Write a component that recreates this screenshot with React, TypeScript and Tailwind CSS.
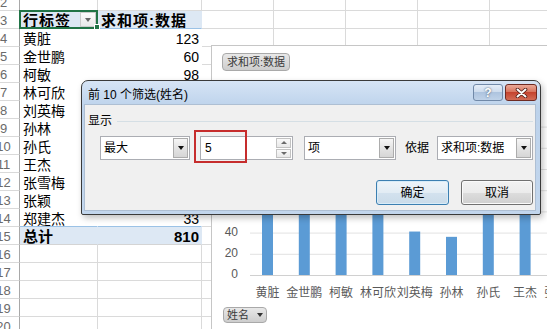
import React from "react";

const names = ["黄脏", "金世鹏", "柯敏", "林可欣", "刘英梅", "孙林", "孙氏", "王杰", "张雪梅", "张颖", "郑建杰"];
const values = [123, 60, 98, 92, 41, 36, 87, 95, 80, 65, 33];

function DownTri() {
  return <span className="block w-0 h-0 border-l-[3.5px] border-r-[3.5px] border-t-[4px] border-l-transparent border-r-transparent border-t-[#111]" />;
}

function Combo({ w, text }: { w: string; text: string }) {
  return (
    <div className={`${w} h-[24px] shrink-0 border border-[#abadb3] bg-white flex`}>
      <div className="flex-1 flex items-center pl-[3px] text-[12px] leading-none text-black whitespace-nowrap">{text}</div>
      <div className="w-[15px] my-[1px] mr-[1px] border border-[#acacac] bg-[linear-gradient(180deg,#f6f6f6_0%,#e4e4e4_50%,#d6d6d6_100%)] flex items-center justify-center">
        <DownTri />
      </div>
    </div>
  );
}

function Row({ r }: { r: number }) {
  const isHeader = r === 3;
  const isData = r >= 4 && r <= 14;
  const isTotal = r === 15;
  const idx = r - 4;

  let aCls = "w-[78px] shrink-0 border-r border-b border-[#dadada]";
  let bCls = "w-[104px] shrink-0 border-r border-b border-[#dadada]";
  if (isHeader) {
    aCls = "relative w-[78px] shrink-0 border-r border-b border-r-transparent border-b-[#9bc2e6] bg-[#dde8f4] flex items-center";
    bCls = "w-[104px] shrink-0 border-r border-b border-r-transparent border-b-[#9bc2e6] bg-[#dde8f4] flex items-center";
  } else if (isData) {
    aCls =
      r === 14
        ? "w-[78px] shrink-0 border-r border-b border-r-transparent border-b-[#9bc2e6] flex items-center pt-[2px] pl-[3px]"
        : "w-[78px] shrink-0 border-r border-b border-transparent flex items-center pt-[2px] pl-[3px]";
    bCls =
      r === 14
        ? "w-[104px] shrink-0 border-r border-b border-r-transparent border-b-[#9bc2e6] flex items-center justify-end pt-[2px] pr-[2px]"
        : "w-[104px] shrink-0 border-r border-b border-transparent flex items-center justify-end pt-[2px] pr-[2px]";
  } else if (isTotal) {
    aCls = "w-[78px] shrink-0 border-r border-b border-r-transparent border-b-[#d4d4d4] bg-[#dde8f4] flex items-center pt-[1px] pl-[3px]";
    bCls = "w-[104px] shrink-0 border-r border-b border-r-transparent border-b-[#d4d4d4] bg-[#dde8f4] flex items-center justify-end pt-[1px] pr-[2px]";
  }

  return (
    <div className="flex h-[18px] shrink-0">
      <div className="w-[32px] shrink-0 border-r border-b border-r-[#a8a8a8] border-b-[#d9d9d9] flex items-center justify-center text-[13px] leading-none text-[#6a6a6a] pt-[1px]">
        {r}
      </div>
      <div className={aCls}>
        {isHeader && (
          <>
            <span className="pl-[3px] pt-[1px] text-[15px] font-bold tracking-[1px] leading-none text-black">行标签</span>
            <div className="ml-auto mr-[1px] w-[16px] h-[15px] border border-[#cbcbcb] bg-[linear-gradient(180deg,#fbfbfb_0%,#e9e9e9_100%)] flex items-center justify-center">
              <span className="block w-0 h-0 border-l-[3.5px] border-r-[3.5px] border-t-[4px] border-l-transparent border-r-transparent border-t-[#666]" />
            </div>
            <div className="absolute -left-[1px] -top-[1px] w-[79px] h-[19px] border-2 border-[#217346] pointer-events-none" />
            <div className="absolute left-[74px] top-[13px] w-[6px] h-[6px] bg-[#217346] border border-white" />
          </>
        )}
        {isData && <span className="text-[14px] leading-none text-black">{names[idx]}</span>}
        {isTotal && <span className="text-[15px] font-bold leading-none text-black">总计</span>}
      </div>
      <div className={bCls}>
        {isHeader && <span className="pl-[3px] pt-[1px] text-[15px] font-bold tracking-[1px] leading-none text-black whitespace-nowrap">求和项:数据</span>}
        {isData && <span className="text-[14px] leading-none text-black">{values[idx]}</span>}
        {isTotal && <span className="text-[15px] font-bold leading-none text-black">810</span>}
      </div>
      <div className="w-[72px] shrink-0 border-r border-b border-[#dadada]" />
      <div className="w-[72px] shrink-0 border-r border-b border-[#dadada]" />
      <div className="w-[72px] shrink-0 border-r border-b border-[#dadada]" />
      <div className="w-[72px] shrink-0 border-r border-b border-[#dadada]" />
      <div className="w-[72px] shrink-0 border-r border-b border-[#dadada]" />
    </div>
  );
}

function Chart() {
  const scale = 1.06;
  const base = 204;
  const grid = [20, 40, 60, 80, 100, 120, 140];
  const axis = [0, 20, 40, 60, 80, 100, 120, 140];
  return (
    <div className="absolute left-[211px] top-[45px] w-[345px] h-[290px] bg-white border-l border-t border-[#c6c6c6] flex flex-col">
      <div className="ml-[10px] mt-[7px] self-start h-[18px] px-[4px] rounded-[4px] border border-[#a9a9a9] bg-[linear-gradient(180deg,#e8e8e8_0%,#cdcdcd_100%)] flex items-center text-[11px] leading-none text-[#3a3a3a] whitespace-nowrap">
        求和项:数据
      </div>
      <svg width="335" height="236" className="block shrink-0">
        {grid.map((v) => (
          <line key={v} x1={38} x2={335} y1={base - v * scale + 0.5} y2={base - v * scale + 0.5} stroke="#e2e2e2" strokeWidth={1} />
        ))}
        <line x1={38} x2={335} y1={base + 0.5} y2={base + 0.5} stroke="#d0d0d0" strokeWidth={1} />
        {values.map((v, i) => (
          <rect key={i} x={50 + 36.8 * i} y={base - v * scale} width={11} height={v * scale} fill="#5b9bd5" />
        ))}
        {axis.map((v) => (
          <text
            key={v}
            x={26}
            y={base - v * scale - 1}
            textAnchor="end"
            dominantBaseline="central"
            fontSize={12}
            fill="#595959"
            fontFamily="'Liberation Sans', sans-serif"
          >
            {v}
          </text>
        ))}
        {names.map((n, i) => (
          <text
            key={n}
            x={55.5 + 36.8 * i}
            y={220.5}
            textAnchor="middle"
            dominantBaseline="central"
            fontSize={12}
            fill="#595959"
            fontFamily="'Noto Sans CJK SC', sans-serif"
          >
            {n}
          </text>
        ))}
      </svg>
      <div className="ml-[11px] self-start h-[16px] w-[44px] rounded-[4px] border border-[#a9a9a9] bg-[linear-gradient(180deg,#e8e8e8_0%,#cdcdcd_100%)] flex items-center pl-[3px] gap-[8px] text-[11px] leading-none text-[#3a3a3a]">
        <span>姓名</span>
        <span className="block w-0 h-0 border-l-[3px] border-r-[3px] border-t-[4px] border-l-transparent border-r-transparent border-t-[#333]" />
      </div>
    </div>
  );
}

function Dialog() {
  return (
    <div className="absolute left-[81px] top-[80px] w-[460px] h-[135px] rounded-t-[7px] rounded-b-[2px] border border-[#3a3a3a] bg-[linear-gradient(180deg,#d6e4f5_0%,#bcd2eb_20%,#c2d6ed_100%)] flex flex-col shadow-[2px_3px_6px_rgba(0,0,0,0.25)]">
      <div className="h-[23px] shrink-0 flex items-start justify-between">
        <div className="pl-[6px] pt-[7px] text-[12px] leading-[14px] text-black whitespace-nowrap">前 10 个筛选(姓名)</div>
        <div className="flex gap-[2px] pt-[3px] pr-[3px]">
          <div className="w-[30px] h-[17px] rounded-[3px] border border-[#7189a8] bg-[linear-gradient(180deg,#e6eef8_0%,#cbdaec_50%,#aec4df_50%,#bfd2e8_100%)] flex items-center justify-center text-[12px] font-bold leading-none text-white [text-shadow:0_0_2px_#2a3d57]">
            ?
          </div>
          <div className="w-[32px] h-[17px] rounded-[3px] border border-[#6e2a22] bg-[linear-gradient(180deg,#eaa998_0%,#d8755f_45%,#c5442f_50%,#d26c56_100%)] flex items-center justify-center">
            <svg width="13" height="10" viewBox="0 0 13 10">
              <path d="M2.5 1.5 L10.5 8.5 M10.5 1.5 L2.5 8.5" stroke="#4b1a14" strokeWidth={3.6} strokeLinecap="round" />
              <path d="M2.5 1.5 L10.5 8.5 M10.5 1.5 L2.5 8.5" stroke="#ffffff" strokeWidth={2} strokeLinecap="round" />
            </svg>
          </div>
        </div>
      </div>
      <div className="flex-1 ml-[2px] mr-[4px] mb-[3px] bg-[#f0f0f0] border border-[#aebfd3] flex flex-col">
        <div className="mt-[9px] h-[14px] flex items-center">
          <span className="ml-[3px] text-[12px] leading-none text-black">显示</span>
          <div className="flex-1 h-px bg-[#d5dfe5] ml-[5px] mr-[2px]" />
        </div>
        <div className="mt-[8px] h-[24px] flex items-center">
          <div className="ml-[15px]">
            <Combo w="w-[90px]" text="最大" />
          </div>
          <div className="ml-[10px] w-[93px] h-[24px] shrink-0 border border-[#abadb3] bg-white flex">
            <div className="flex-1 flex items-center pl-[4px] text-[12px] leading-none text-black">5</div>
            <div className="w-[15px] my-[1px] mr-[1px] flex flex-col gap-px">
              <div className="flex-1 border border-[#c2c2c2] bg-[linear-gradient(180deg,#fafafa_0%,#e8e8e8_100%)] flex items-center justify-center">
                <span className="block w-0 h-0 border-l-[3px] border-r-[3px] border-b-[3px] border-l-transparent border-r-transparent border-b-[#6a6a6a]" />
              </div>
              <div className="flex-1 border border-[#c2c2c2] bg-[linear-gradient(180deg,#fafafa_0%,#e8e8e8_100%)] flex items-center justify-center">
                <span className="block w-0 h-0 border-l-[3px] border-r-[3px] border-t-[3px] border-l-transparent border-r-transparent border-t-[#6a6a6a]" />
              </div>
            </div>
          </div>
          <div className="ml-[11px]">
            <Combo w="w-[92px]" text="项" />
          </div>
          <span className="ml-[9px] text-[12px] leading-none text-black whitespace-nowrap">依据</span>
          <div className="ml-[8px]">
            <Combo w="w-[96px]" text="求和项:数据" />
          </div>
        </div>
        <div className="mt-[20px] h-[25px] flex justify-end gap-[12px] pr-[2px]">
          <div className="w-[73px] h-[25px] rounded-[3px] border border-[#3c7fb1] bg-[linear-gradient(180deg,#eef4f9_0%,#e2ecf4_50%,#d3e2ee_50%,#cadbe9_100%)] shadow-[inset_0_0_0_1px_#d8ecf8] flex items-center justify-center text-[12px] leading-none text-black">
            确定
          </div>
          <div className="w-[72px] h-[25px] rounded-[3px] border border-[#707070] bg-[linear-gradient(180deg,#f2f2f2_0%,#ebebeb_50%,#dddddd_50%,#cfcfcf_100%)] shadow-[inset_0_0_0_1px_#fafafa] flex items-center justify-center text-[12px] leading-none text-black">
            取消
          </div>
        </div>
      </div>
      <div className="absolute left-[112px] top-[49px] w-[53px] h-[33px] border-2 border-[#c62d2d] pointer-events-none" />
    </div>
  );
}

export default function App() {
  const rowNums = Array.from({ length: 19 }, (_, i) => i + 2);
  return (
    <div className="relative w-[547px] h-[329px] overflow-hidden bg-white font-['Liberation_Sans','Noto_Sans_CJK_SC',sans-serif]">
      <div className="flex flex-col -mt-[7px] -ml-[12px]">
        {rowNums.map((r) => (
          <Row key={r} r={r} />
        ))}
      </div>
      <Chart />
      <Dialog />
    </div>
  );
}
